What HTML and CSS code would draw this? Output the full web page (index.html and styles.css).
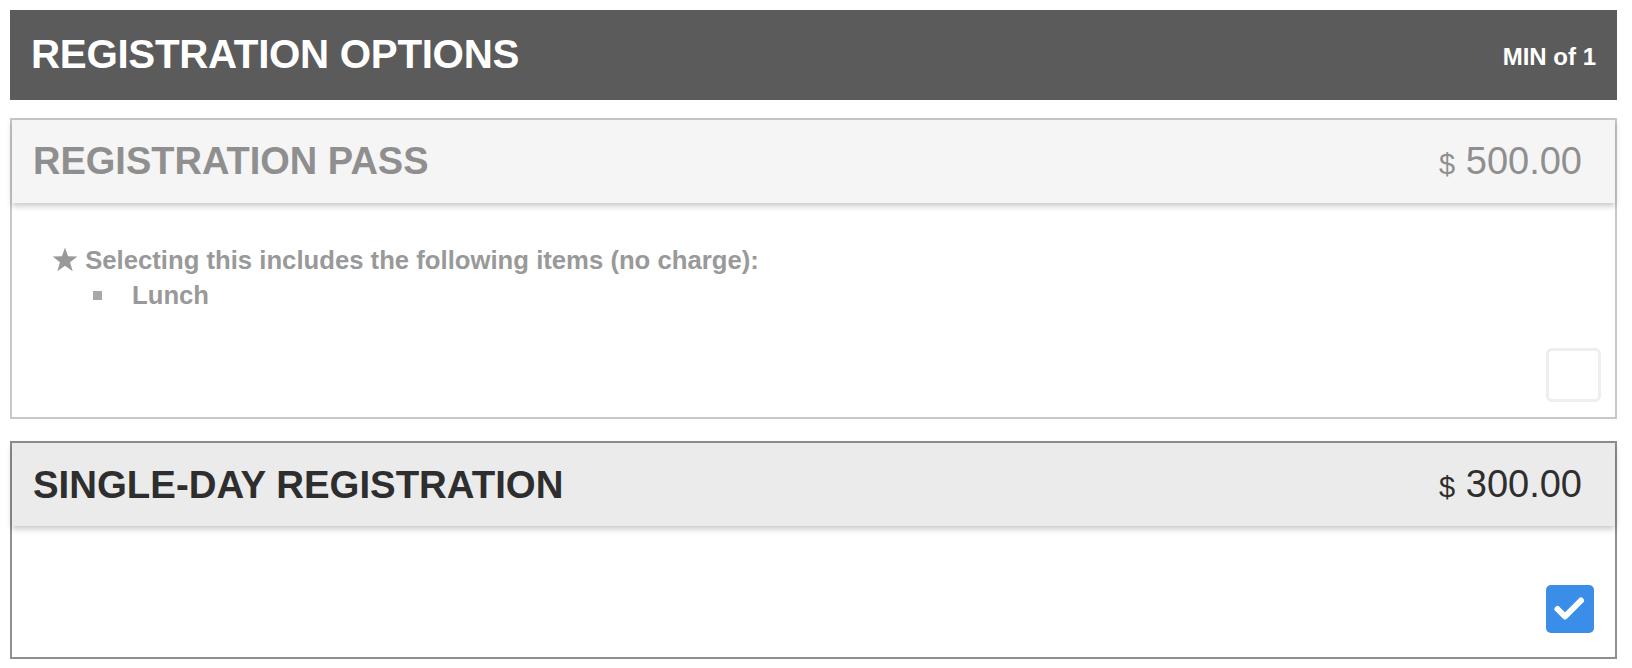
FILE: index.html
```html
<!DOCTYPE html>
<html>
<head>
  <meta charset="utf-8"/>
  <link rel="stylesheet" href="styles.css">
</head>
<body>
  <div class="options">
    <div class="options-bar">
      <h1>REGISTRATION OPTIONS</h1>
      <span class="limit">MIN of 1</span>
    </div>

    <section class="option disabled">
      <header class="option-head">
        <h2>REGISTRATION PASS</h2>
        <span class="price"><span class="cur">$</span> 500.00</span>
      </header>
      <div class="option-body">
        <div class="includes">
          <p>
            <svg class="star" width="26" height="25" viewBox="0 0 26 25">
              <polygon points="13,0.5 16.1,9.3 25.4,9.5 18,15.2 20.7,24.2 13,18.8 5.3,24.2 8,15.2 0.6,9.5 9.9,9.3" fill="#999"/>
            </svg>
            Selecting this includes the following items (no charge):
          </p>
          <ul>
            <li>Lunch</li>
          </ul>
        </div>
        <div class="select-row">
          <span class="check"></span>
        </div>
      </div>
    </section>

    <section class="option selected">
      <header class="option-head">
        <h2>SINGLE-DAY REGISTRATION</h2>
        <span class="price"><span class="cur">$</span> 300.00</span>
      </header>
      <div class="option-body">
        <div class="select-row">
          <span class="check on">
            <svg width="48" height="48" viewBox="0 0 48 48">
              <polyline points="11.5,24 19,31.5 35,15.5" fill="none" stroke="#fff" stroke-width="6" stroke-linecap="round" stroke-linejoin="round"/>
            </svg>
          </span>
        </div>
      </div>
    </section>
  </div>
</body>
</html>
```

FILE: styles.css
```css
body {
  margin: 0;
  font-family: "Liberation Sans", Arial, sans-serif;
  background: #fff;
}
.options {
  margin: 10px 15px 0 10px;
}
.options-bar {
  display: flex;
  align-items: center;
  justify-content: space-between;
  height: 90px;
  padding: 0 21px 0 21px;
  background: #5b5b5b;
  color: #fff;
}
.options-bar h1 {
  margin: 0;
  font-size: 40.3px;
  font-weight: bold;
  letter-spacing: -0.3px;
}
.limit {
  font-size: 24px;
  font-weight: bold;
  margin-top: 4px;
}
.option {
  margin-top: 18px;
  border: 2px solid #c8c8c8;
}
.option + .option {
  margin-top: 22px;
}
.option.selected {
  border-color: #8f8f8f;
}
.option-head {
  display: flex;
  align-items: center;
  justify-content: space-between;
  height: 83px;
  padding: 0 33px 0 21px;
  background: #f5f5f5;
  box-shadow: 0 3px 6px rgba(0, 0, 0, 0.22);
  position: relative;
}
.selected .option-head {
  background: #ebebeb;
}
.option-head h2 {
  margin: 0;
  font-size: 38px;
  font-weight: bold;
  color: #2e2e2e;
}
.selected .option-head h2 {
  font-size: 38.4px;
}
.price {
  font-size: 38px;
  color: #2e2e2e;
}
.cur {
  font-size: 29px;
}
.disabled .option-head h2,
.disabled .price {
  color: #8f8f8f;
}
.option-body {
  padding: 40px 14px 15px 40px;
}
.selected .option-body {
  padding-top: 59px;
  padding-bottom: 24px;
}
.includes {
  color: #999;
  font-size: 25.7px;
  font-weight: bold;
  line-height: 35px;
}
.includes p {
  margin: 0;
}
.star {
  vertical-align: -3px;
}
.includes ul {
  list-style: none;
  margin: 0;
  padding: 0 0 0 80px;
}
.includes li {
  position: relative;
}
.includes li::before {
  content: "";
  position: absolute;
  left: -39px;
  top: 13px;
  width: 9px;
  height: 9px;
  background: #a8a8a8;
}
.select-row {
  display: flex;
  justify-content: flex-end;
  margin-top: 35px;
}
.selected .select-row {
  margin-top: 0;
}
.check {
  display: block;
  width: 55px;
  height: 54px;
  box-sizing: border-box;
  border: 3px solid #eeeeee;
  border-radius: 6px;
}
.check.on {
  width: 48px;
  height: 48px;
  margin-right: 7px;
  border: none;
  border-radius: 5px;
  background: #3a8ee8;
}
.check svg {
  display: block;
}
```
